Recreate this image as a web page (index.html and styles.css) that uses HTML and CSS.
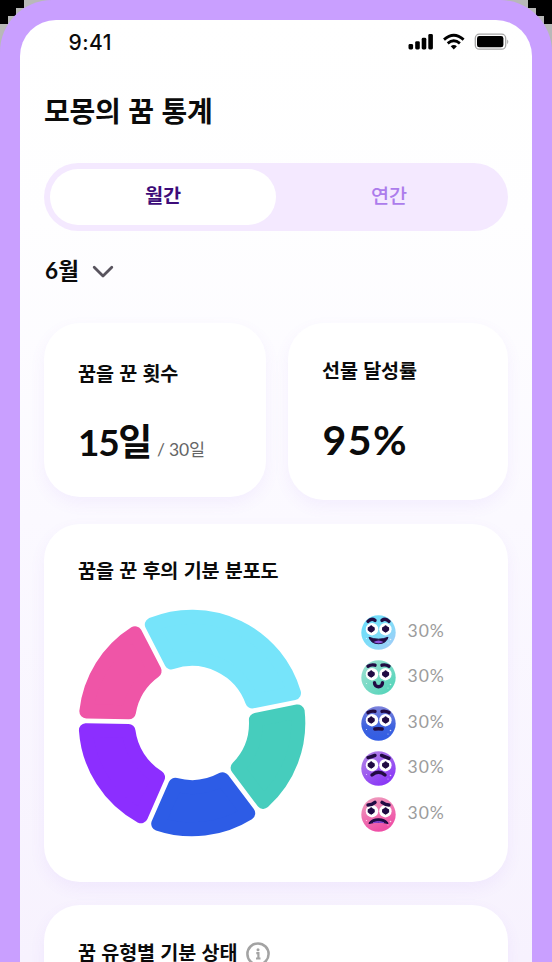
FILE: index.html
```html
<!DOCTYPE html>
<html lang="ko">
<head>
<meta charset="utf-8">
<title>모몽의 꿈 통계</title>
<link rel="stylesheet" href="styles.css">
</head>
<body>
<svg class="defs" width="0" height="0" aria-hidden="true">
  <defs>
    <linearGradient id="sky" x1="0" y1="0" x2="1" y2="1"><stop offset="0" stop-color="#66dcfa"/><stop offset=".55" stop-color="#82dcf8"/><stop offset="1" stop-color="#a9c8f8"/></linearGradient>
    <linearGradient id="mint" x1="0" y1="0" x2="1" y2="1"><stop offset="0" stop-color="#a2e0d2"/><stop offset="1" stop-color="#4bd3b7"/></linearGradient>
    <linearGradient id="blue" x1="0" y1="0" x2="0" y2="1"><stop offset="0" stop-color="#7d83dc"/><stop offset=".6" stop-color="#3d62df"/><stop offset="1" stop-color="#315ce4"/></linearGradient>
    <linearGradient id="violet" x1="0" y1="0" x2=".6" y2="1"><stop offset="0" stop-color="#b58ae4"/><stop offset="1" stop-color="#8a38f7"/></linearGradient>
    <linearGradient id="rose" x1="0" y1="0" x2=".4" y2="1"><stop offset="0" stop-color="#efa2bf"/><stop offset="1" stop-color="#ef4fa6"/></linearGradient>
    <g id="eyes">
      <ellipse cx="11" cy="14.2" rx="6.2" ry="6.2" fill="#fff"/><ellipse cx="24.4" cy="14.2" rx="6.2" ry="6.2" fill="#fff"/>
      <g fill="#210b43"><circle cx="10.2" cy="14" r="3.1"/><circle cx="24.6" cy="14" r="3.1"/></g>
      <g fill="none" stroke="#210b43" stroke-width="2.2" stroke-linecap="round"><path d="M10.2 11.4V16.6M7.7 13.2L12.7 14.6M12.7 13.2L7.7 14.6"/><path d="M24.6 11.4V16.6M22.1 13.2L27.1 14.6M27.1 13.2L22.1 14.6"/></g>
      <g fill="#fff" opacity=".75"><circle cx="29.5" cy="24.5" r=".8"/><circle cx="27" cy="28" r=".5"/><circle cx="5.5" cy="23.5" r=".6"/></g>
    </g>
  </defs>
</svg>
<div class="stage">
  <svg class="corner" width="48" height="48" viewBox="0 0 48 48"><path fill="#000" d="M0 0h24v8h-8v8H8v8H0z"/></svg>
  <svg class="corner corner-right" width="48" height="48" viewBox="0 0 48 48"><path fill="#000" d="M0 0h24v8h-8v8H8v8H0z"/></svg>
  <main class="phone">
    <div class="screen">
      <header class="status">
        <span class="time">9:41</span>
        <svg class="status-icons" width="102" height="18" viewBox="0 0 102 18">
          <rect x="0.5" y="11" width="4.6" height="5.5" rx="1.4"/><rect x="7.2" y="8.2" width="4.6" height="8.3" rx="1.4"/><rect x="13.7" y="4.8" width="4.6" height="11.7" rx="1.4"/><rect x="20.3" y="1" width="4.6" height="15.5" rx="1.4"/>
          <g fill="none" stroke="#000" stroke-width="2.8"><path d="M36 6.6Q45.8-2.2 55.6 6.6"/><path d="M39.7 10.4Q45.8 5.2 51.9 10.4"/></g>
          <path d="M42.7 13.2Q45.8 11 48.9 13.2L45.8 16.5z"/>
          <rect x="67.3" y="1.2" width="30.4" height="15" rx="4" fill="none" stroke="#a6a6a6" stroke-width="1.3"/>
          <rect x="69" y="3" width="26.4" height="11.3" rx="2.4"/><path d="M99.2 6.4q2.2 1.9 0 4.8z" fill="#a6a6a6"/>
        </svg>
      </header>
      <h1>모몽의 꿈 통계</h1>
      <nav class="tabs"><span class="tab active">월간</span><span class="tab">연간</span></nav>
      <div class="month"><span>6월</span><svg width="22" height="14" viewBox="0 0 22 14"><path d="M2.2 2.2L11 11L19.8 2.2" fill="none" stroke="#58545e" stroke-width="2.8" stroke-linecap="round" stroke-linejoin="round"/></svg></div>
      <section class="summary">
        <article class="card count"><h2>꿈을 꾼 횟수</h2><p><strong>15일</strong><span>/ 30일</span></p></article>
        <article class="card rate"><h2>선물 달성률</h2><p><strong>95%</strong></p></article>
      </section>
      <section class="card moods">
        <h2>꿈을 꾼 후의 기분 분포도</h2>
        <div class="mood-content">
          <svg id="donut" width="230" height="230" viewBox="-115 -115 230 230"></svg>
          <ul>
            <li><svg viewBox="0 0 35 35"><circle cx="17.5" cy="17.5" r="17.2" fill="url(#sky)"/><use href="#eyes"/><g class="brows"><path d="M7 6.4Q10.5 2.8 14 5.4"/><path d="M21 5.4Q24.5 2.8 28 6.4"/></g><path d="M8 22.3Q17.5 26 27 22.3Q25 28.7 17.5 28.7T8 22.3z" fill="#210b43" stroke="#210b43" stroke-linejoin="round"/><path d="M12.5 27Q17.5 23.8 22.5 27Q17.5 29.6 12.5 27z" fill="#8b55dc"/></svg><span>30%</span></li>
            <li><svg viewBox="0 0 35 35"><circle cx="17.5" cy="17.5" r="17.2" fill="url(#mint)"/><use href="#eyes"/><g class="brows"><path d="M7 6.2Q10.5 4.2 14 5.2"/><path d="M21 5.2Q24.5 4.2 28 6.2"/></g><path class="mouth" d="M13.5 22.8C13.5 28 21.5 28 21.5 22.8"/></svg><span>30%</span></li>
            <li><svg viewBox="0 0 35 35"><circle cx="17.5" cy="17.5" r="17.2" fill="url(#blue)"/><use href="#eyes"/><g class="brows"><path d="M7 6.6Q10.5 4.6 14 5.4"/><path d="M21 5.4Q24.5 4.6 28 6.6"/></g><path class="mouth" d="M13.8 23Q17.5 22.5 21.2 23"/></svg><span>30%</span></li>
            <li><svg viewBox="0 0 35 35"><circle cx="17.5" cy="17.5" r="17.2" fill="url(#violet)"/><use href="#eyes"/><g class="brows"><path d="M7 6.6Q10 6.2 14 4.4"/><path d="M20.5 4.4Q24.5 6 28 7.4"/></g><path class="mouth" d="M11 24Q17.5 18.6 24 24"/></svg><span>30%</span></li>
            <li><svg viewBox="0 0 35 35"><circle cx="17.5" cy="17.5" r="17.2" fill="url(#rose)"/><use href="#eyes"/><g class="brows"><path d="M7 8Q11 8 14 5.4"/><path d="M21 5.4Q24.5 8 28 8"/></g><path d="M8.2 26.3Q10.5 21.8 17.5 21.8T26.8 26.3Q17.5 23.8 8.2 26.3z" fill="#210b43" stroke="#210b43" stroke-width="1.3" stroke-linejoin="round"/><path d="M12 25.6Q17.5 23.3 23 25.6Q17.5 25 12 25.6z" fill="#8544d1" stroke="#8544d1"/></svg><span>30%</span></li>
          </ul>
        </div>
      </section>
      <section class="card types"><h2>꿈 유형별 기분 상태</h2><svg width="24" height="24" viewBox="0 0 24 24"><circle cx="12" cy="12" r="10.6" fill="none" stroke="#a3a3a3" stroke-width="2.5"/><circle cx="12" cy="7.7" r="1.5" fill="#a3a3a3"/><path d="M10.3 11.2H12.4V16.2M10 16.5H14.5" fill="none" stroke="#a3a3a3" stroke-width="2.2"/></svg></section>
    </div>
  </main>
</div>
<script src="chart.js"></script>
</body>
</html>
```
FILE: styles.css
```css
* { box-sizing: border-box; margin: 0; padding: 0; }
body { width: 552px; height: 962px; overflow: hidden; font-family: "Noto Sans CJK KR", sans-serif; color: #0b0b0b; }
.defs { position: absolute; }
.stage { position: relative; height: 962px; overflow: hidden; background: #b8b8b8; }
.corner { position: absolute; top: 0; left: 0; }
.corner-right { left: auto; right: 0; transform: scaleX(-1); }
.phone { position: relative; height: 1200px; padding: 20px; background: #c99fff; border-radius: 52px 52px 0 0; }
.screen { height: 1180px; padding: 0 24px; border-radius: 36px 36px 0 0; background: linear-gradient(#fff 0, #fefeff 200px, #fbf9ff 500px, #f7f2fe 940px); }
.status { height: 44px; padding: 13px 0 0 24.5px; display: flex; justify-content: space-between; }
.time { padding-top: 1px; font: 500 21px/18px Inter, sans-serif; letter-spacing: .5px; }
.status-icons { margin-right: -2px; }
h1 { margin-top: 24px; height: 45px; font-size: 28px; line-height: 44px; font-weight: 700; letter-spacing: -.2px; }
.tabs { display: flex; height: 68px; margin-top: 30px; padding: 6px; border-radius: 34px; background: #f4e9ff; }
.tab { flex: 1; height: 56px; border-radius: 28px; text-align: center; font-size: 19.7px; line-height: 52px; font-weight: 500; color: #ac7cec; }
.active { background: #fff; color: #3d0c79; font-weight: 700; }
.month { display: flex; align-items: center; gap: 13px; height: 30px; margin-top: 25px; padding-left: 1px; font: 700 22.5px/28px Lato, "Noto Sans CJK KR", sans-serif; letter-spacing: .3px; }
.month span { height: 28px; }
.month svg { margin-top: 2px; }
.summary { display: grid; grid-template-columns: 222px 220px; gap: 22px; align-items: start; margin-top: 37px; }
.card { background: #fff; border-radius: 36px; box-shadow: 0 6px 16px rgba(143, 92, 235, .07); }
h2 { font-size: 19.6px; line-height: 30px; font-weight: 700; letter-spacing: -.12px; white-space: nowrap; }
.count, .rate { padding: 35px 34px 0; }
.count { height: 174px; }
.rate { height: 177px; padding-top: 32px; }
.summary p { display: flex; align-items: baseline; gap: 6px; margin-top: 28px; height: 52px; line-height: 52px; white-space: nowrap; font-family: Lato, "Noto Sans CJK KR", sans-serif; }
.summary strong { font-size: 37px; font-weight: 700; letter-spacing: -1.3px; }
.rate p { margin-top: 29px; padding-left: .5px; }
.rate strong { font-size: 41px; letter-spacing: 1.5px; }
.summary p span { font-size: 17.5px; letter-spacing: -.2px; color: #656565; font-weight: 400; }
.moods { height: 358px; margin-top: 24px; padding: 31px 32px 0 33px; }
.moods h2 { padding-left: 1px; }
.mood-content { display: flex; margin-top: 23px; }
#donut { margin-left: -.5px; }
ul { list-style: none; margin: 7px 0 0 54px; }
li { display: flex; align-items: center; gap: 12px; height: 35px; margin-bottom: 10.4px; font: 400 17.5px/30px Lato, sans-serif; letter-spacing: 1px; color: #9c9c9c; }
li svg { width: 35px; height: 35px; }
li span { height: 33px; }
.brows, .mouth { fill: none; stroke: #210b43; stroke-width: 3.4; stroke-linecap: round; stroke-linejoin: round; }
.types { display: flex; align-items: flex-start; gap: 9px; height: 240px; margin-top: 23px; padding: 32px 34px; }
.types svg { margin-top: 5px; }
```
FILE: chart.js
```js
const segments = [
  [-27.3, 78.7, '#76e4fa'],
  [78.7, 143, '#46cdbd'],
  [143, 203.6, '#2d5ce6'],
  [203.6, 271.2, '#8c2eff'],
  [271.2, 332.7, '#ef55a7']
];
const outer = 106.3, inner = 64, inset = 9.4;
const shift = radius => Math.asin(inset / radius) * 180 / Math.PI;
const point = (radius, degrees) => {
  const a = degrees * Math.PI / 180;
  return `${(radius * Math.sin(a)).toFixed(2)} ${(-radius * Math.cos(a)).toFixed(2)}`;
};
for (const [start, end, color] of segments) {
  const path = document.createElementNS('http://www.w3.org/2000/svg', 'path');
  path.setAttribute('d', `M${point(outer, start + shift(outer))}A${outer} ${outer} 0 0 1 ${point(outer, end - shift(outer))}L${point(inner, end - shift(inner))}A${inner} ${inner} 0 0 0 ${point(inner, start + shift(inner))}Z`);
  path.setAttribute('fill', color);
  path.setAttribute('stroke', color);
  path.setAttribute('stroke-width', '14');
  path.setAttribute('stroke-linejoin', 'round');
  document.getElementById('donut').append(path);
}
```
